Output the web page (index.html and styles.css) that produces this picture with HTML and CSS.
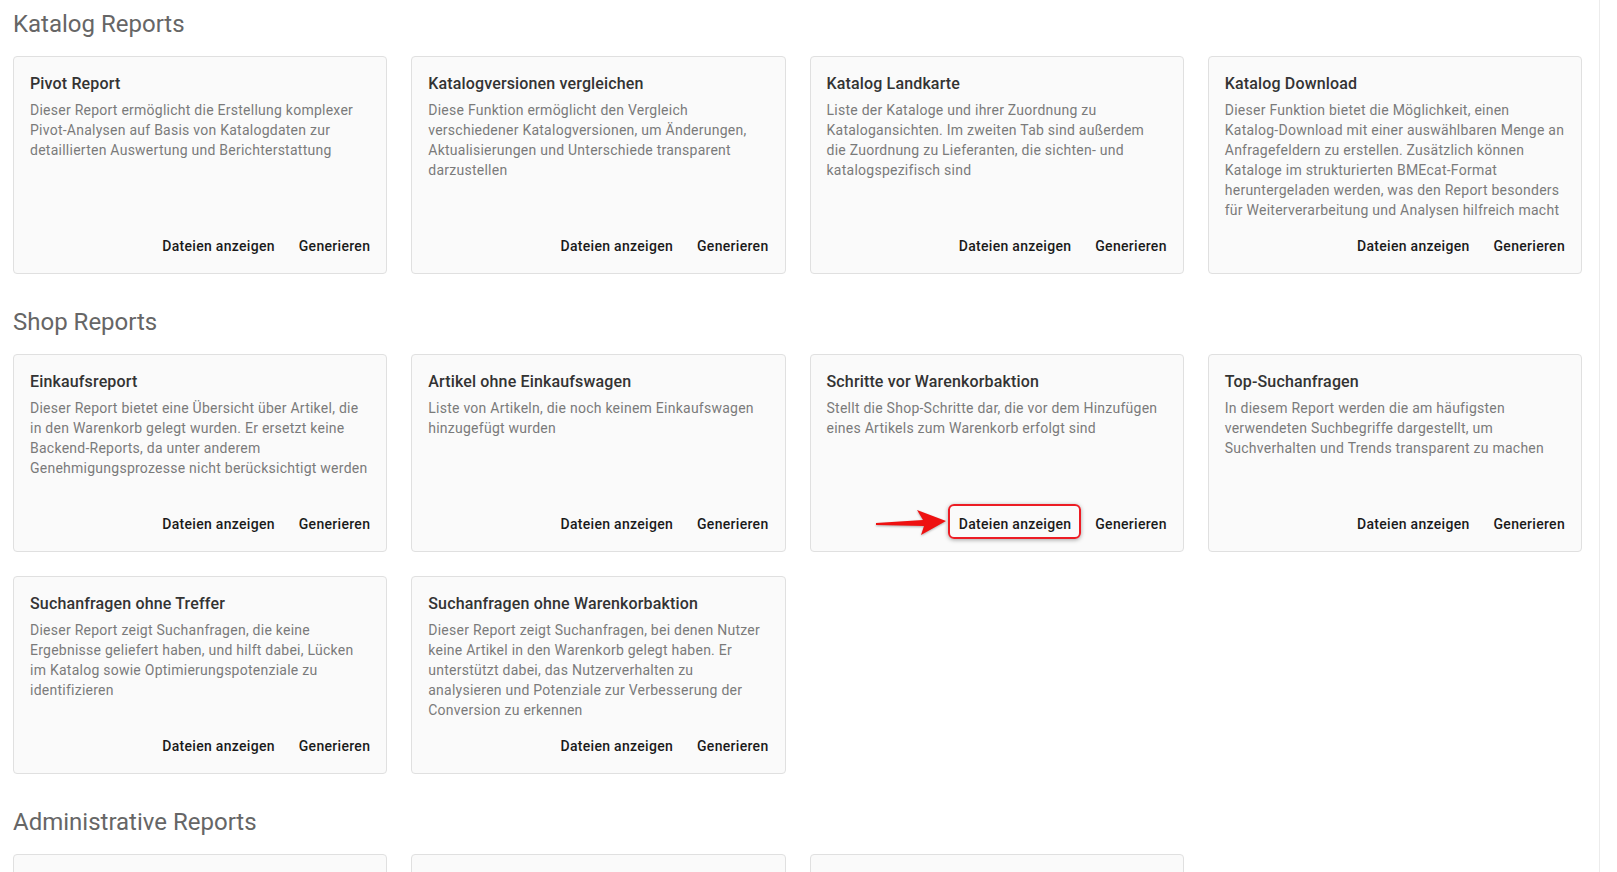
FILE: index.html
```html
<!DOCTYPE html>
<html lang="de">
<head>
    <meta charset="UTF-8">
    <meta name="viewport" content="width=device-width, initial-scale=1.0">
    <title>Reports</title>
    <link rel="stylesheet" href="styles.css">
</head>
<body>
    <div class="page">
        <div class="content">
            <section class="report-section">
                <h2 class="section-title">Katalog Reports</h2>
                <div class="report-grid">
                    <div class="report-card">
                        <div class="card-title">Pivot Report</div>
                        <div class="card-text">Dieser Report ermöglicht die Erstellung komplexer Pivot-Analysen auf Basis von Katalogdaten zur detaillierten Auswertung und Berichterstattung</div>
                        <div class="card-actions">
                            <button class="btn">Dateien anzeigen</button>
                            <button class="btn">Generieren</button>
                        </div>
                    </div>
                    <div class="report-card">
                        <div class="card-title">Katalogversionen vergleichen</div>
                        <div class="card-text">Diese Funktion ermöglicht den Vergleich verschiedener Katalogversionen, um Änderungen, Aktualisierungen und Unterschiede transparent darzustellen</div>
                        <div class="card-actions">
                            <button class="btn">Dateien anzeigen</button>
                            <button class="btn">Generieren</button>
                        </div>
                    </div>
                    <div class="report-card">
                        <div class="card-title">Katalog Landkarte</div>
                        <div class="card-text">Liste der Kataloge und ihrer Zuordnung zu Katalogansichten. Im zweiten Tab sind außerdem die Zuordnung zu Lieferanten, die sichten- und katalogspezifisch sind</div>
                        <div class="card-actions">
                            <button class="btn">Dateien anzeigen</button>
                            <button class="btn">Generieren</button>
                        </div>
                    </div>
                    <div class="report-card">
                        <div class="card-title">Katalog Download</div>
                        <div class="card-text">Dieser Funktion bietet die Möglichkeit, einen Katalog-Download mit einer auswählbaren Menge an Anfragefeldern zu erstellen. Zusätzlich können Kataloge im strukturierten BMEcat-Format heruntergeladen werden, was den Report besonders für Weiterverarbeitung und Analysen hilfreich macht</div>
                        <div class="card-actions">
                            <button class="btn">Dateien anzeigen</button>
                            <button class="btn">Generieren</button>
                        </div>
                    </div>
                </div>
            </section>

            <section class="report-section">
                <h2 class="section-title">Shop Reports</h2>
                <div class="report-grid">
                    <div class="report-card">
                        <div class="card-title">Einkaufsreport</div>
                        <div class="card-text">Dieser Report bietet eine Übersicht über Artikel, die in den Warenkorb gelegt wurden. Er ersetzt keine Backend-Reports, da unter anderem Genehmigungsprozesse nicht berücksichtigt werden</div>
                        <div class="card-actions">
                            <button class="btn">Dateien anzeigen</button>
                            <button class="btn">Generieren</button>
                        </div>
                    </div>
                    <div class="report-card">
                        <div class="card-title">Artikel ohne Einkaufswagen</div>
                        <div class="card-text">Liste von Artikeln, die noch keinem Einkaufswagen hinzugefügt wurden</div>
                        <div class="card-actions">
                            <button class="btn">Dateien anzeigen</button>
                            <button class="btn">Generieren</button>
                        </div>
                    </div>
                    <div class="report-card">
                        <div class="card-title">Schritte vor Warenkorbaktion</div>
                        <div class="card-text">Stellt die Shop-Schritte dar, die vor dem Hinzufügen eines Artikels zum Warenkorb erfolgt sind</div>
                        <div class="card-actions">
                            <button class="btn btn-marked">
                                <svg class="mark-arrow" width="72" height="28" viewBox="0 0 72 28">
                                    <polygon points="0,14 47,11 41,1 70,12 45,26 48,17 0,16" fill="#ee1111"/>
                                </svg>
                                <span class="mark-box"></span>
                                Dateien anzeigen
                            </button>
                            <button class="btn">Generieren</button>
                        </div>
                    </div>
                    <div class="report-card">
                        <div class="card-title">Top-Suchanfragen</div>
                        <div class="card-text">In diesem Report werden die am häufigsten verwendeten Suchbegriffe dargestellt, um Suchverhalten und Trends transparent zu machen</div>
                        <div class="card-actions">
                            <button class="btn">Dateien anzeigen</button>
                            <button class="btn">Generieren</button>
                        </div>
                    </div>
                    <div class="report-card">
                        <div class="card-title">Suchanfragen ohne Treffer</div>
                        <div class="card-text">Dieser Report zeigt Suchanfragen, die keine Ergebnisse geliefert haben, und hilft dabei, Lücken im Katalog sowie Optimierungspotenziale zu identifizieren</div>
                        <div class="card-actions">
                            <button class="btn">Dateien anzeigen</button>
                            <button class="btn">Generieren</button>
                        </div>
                    </div>
                    <div class="report-card">
                        <div class="card-title">Suchanfragen ohne Warenkorbaktion</div>
                        <div class="card-text">Dieser Report zeigt Suchanfragen, bei denen Nutzer keine Artikel in den Warenkorb gelegt haben. Er unterstützt dabei, das Nutzerverhalten zu analysieren und Potenziale zur Verbesserung der Conversion zu erkennen</div>
                        <div class="card-actions">
                            <button class="btn">Dateien anzeigen</button>
                            <button class="btn">Generieren</button>
                        </div>
                    </div>
                </div>
            </section>

            <section class="report-section">
                <h2 class="section-title">Administrative Reports</h2>
                <div class="report-grid">
                    <div class="report-card card-empty"></div>
                    <div class="report-card card-empty"></div>
                    <div class="report-card card-empty"></div>
                </div>
            </section>
        </div>
        <div class="scrollbar"></div>
    </div>
</body>
</html>
```

FILE: styles.css
```css
* {
    margin: 0;
    padding: 0;
    box-sizing: border-box;
}

html, body {
    height: 100%;
    overflow: hidden;
}

body {
    font-family: Roboto, 'Liberation Sans', Arial, sans-serif;
    background-color: #fff;
    color: rgba(0,0,0,0.87);
}

.page {
    display: flex;
    height: 100%;
}

.content {
    width: 1599px;
    padding: 8px 17px 0 13px;
}

.scrollbar {
    flex: 1;
    border-left: 1px solid #ececec;
    background: #fff;
}

.report-section {
    margin-bottom: 32px;
}

.section-title {
    font-size: 24px;
    line-height: 32px;
    font-weight: 400;
    color: #666;
    margin-bottom: 16px;
}

.report-grid {
    display: grid;
    grid-template-columns: repeat(4, 1fr);
    gap: 24px;
}

.report-card {
    display: flex;
    flex-direction: column;
    background: #fafafa;
    border: 1px solid #e0e0e0;
    border-radius: 4px;
    padding: 15px 16px 9px;
}

.card-empty {
    min-height: 120px;
}

.card-title {
    font-size: 16px;
    line-height: 24px;
    font-weight: 500;
    letter-spacing: 0.15px;
    color: #333;
    margin-bottom: 4px;
}

.card-text {
    font-size: 14px;
    line-height: 20px;
    letter-spacing: 0.25px;
    color: #7a7a7a;
    min-height: 100px;
}

.card-actions {
    display: flex;
    justify-content: flex-end;
    gap: 8px;
    margin-top: auto;
    padding-top: 8px;
    margin-right: -8px;
}

.btn {
    height: 36px;
    padding: 0 8px;
    border: none;
    background: transparent;
    font-family: inherit;
    font-size: 14px;
    font-weight: 500;
    letter-spacing: 0.3px;
    color: #1a1a1a;
    cursor: pointer;
    border-radius: 4px;
}

.btn:hover {
    background: rgba(0,0,0,0.04);
}

/* annotation from the screenshot */
.btn-marked {
    position: relative;
}

.mark-box {
    position: absolute;
    top: -2px;
    left: -3px;
    right: -2px;
    height: 35px;
    border: 2px solid #ec1c24;
    border-radius: 6px;
    box-shadow: 0 1px 4px rgba(0,0,0,0.35);
}

.mark-arrow {
    position: absolute;
    left: -75px;
    top: 3px;
    filter: drop-shadow(0 1px 1px rgba(0,0,0,0.3));
}
```
